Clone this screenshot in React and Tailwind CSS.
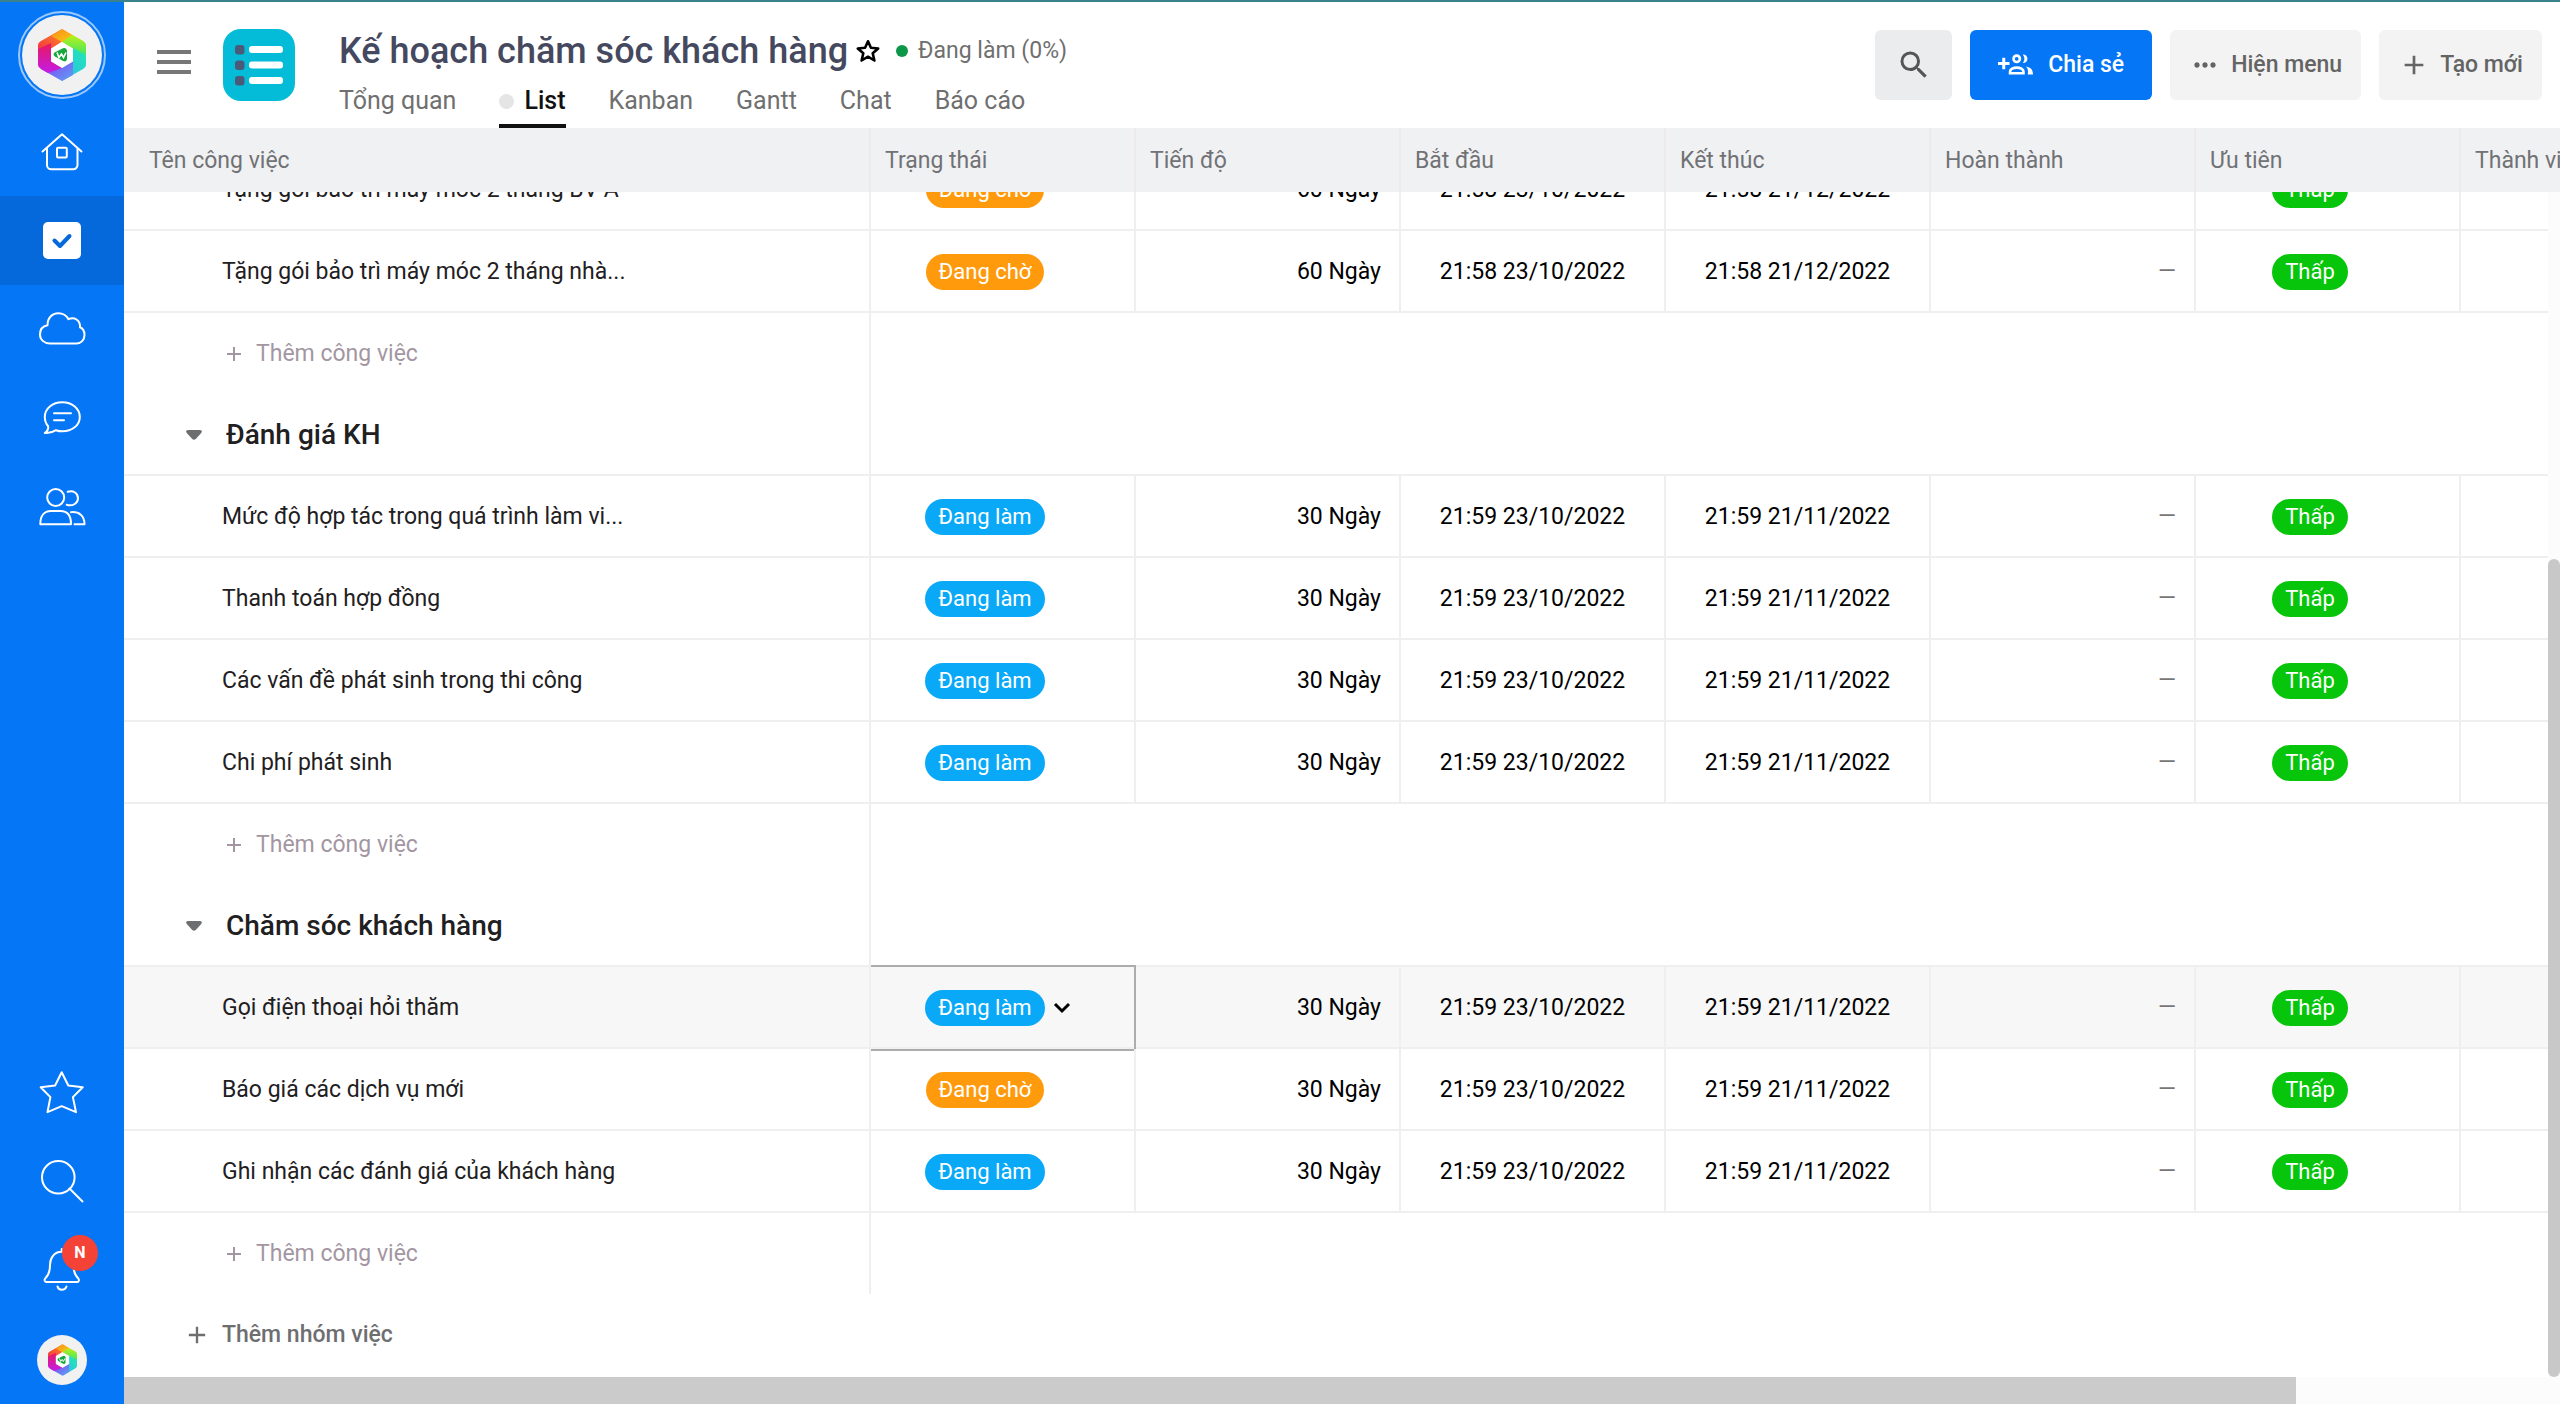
import React, { useEffect, useRef, useState } from 'react';
import clsx from 'clsx';
import { MdSearch, MdMoreHoriz, MdAdd } from 'react-icons/md';

const COLUMNS = ['Trạng thái', 'Tiến độ', 'Bắt đầu', 'Kết thúc', 'Hoàn thành', 'Ưu tiên', 'Thành viên'];

const TABS = ['Tổng quan', 'List', 'Kanban', 'Gantt', 'Chat', 'Báo cáo'];

const STATUS_COLORS = {
    'Đang làm': 'bg-[#09a9f8]',
    'Đang chờ': 'bg-[#ff9a0d]',
};

const GROUPS = [
    {
        id: 'baotri',
        tasks: [
            { name: 'Tặng gói bảo trì máy móc 2 tháng BV A', status: 'Đang chờ', progress: '60 Ngày', start: '21:58 23/10/2022', end: '21:58 21/12/2022' },
            { name: 'Tặng gói bảo trì máy móc 2 tháng nhà...', status: 'Đang chờ', progress: '60 Ngày', start: '21:58 23/10/2022', end: '21:58 21/12/2022' },
        ],
    },
    {
        id: 'danhgia',
        title: 'Đánh giá KH',
        tasks: [
            { name: 'Mức độ hợp tác trong quá trình làm vi...', status: 'Đang làm', progress: '30 Ngày', start: '21:59 23/10/2022', end: '21:59 21/11/2022' },
            { name: 'Thanh toán hợp đồng', status: 'Đang làm', progress: '30 Ngày', start: '21:59 23/10/2022', end: '21:59 21/11/2022' },
            { name: 'Các vấn đề phát sinh trong thi công', status: 'Đang làm', progress: '30 Ngày', start: '21:59 23/10/2022', end: '21:59 21/11/2022' },
            { name: 'Chi phí phát sinh', status: 'Đang làm', progress: '30 Ngày', start: '21:59 23/10/2022', end: '21:59 21/11/2022' },
        ],
    },
    {
        id: 'chamsoc',
        title: 'Chăm sóc khách hàng',
        tasks: [
            { name: 'Gọi điện thoại hỏi thăm', status: 'Đang làm', progress: '30 Ngày', start: '21:59 23/10/2022', end: '21:59 21/11/2022', selected: true },
            { name: 'Báo giá các dịch vụ mới', status: 'Đang chờ', progress: '30 Ngày', start: '21:59 23/10/2022', end: '21:59 21/11/2022' },
            { name: 'Ghi nhận các đánh giá của khách hàng', status: 'Đang làm', progress: '30 Ngày', start: '21:59 23/10/2022', end: '21:59 21/11/2022' },
        ],
    },
];

// Rainbow hexagon ring with the green mark in the middle
const HexLogo = ({ className, id }) => (
    <svg viewBox="0 0 48 52" className={className} aria-hidden="true">
        <defs>
            <linearGradient id={`${id}-a`} x1="0" y1="1" x2="1" y2="0">
                <stop offset="0" stopColor="#f0224b" />
                <stop offset="1" stopColor="#ff9a1a" />
            </linearGradient>
            <linearGradient id={`${id}-b`} x1="0" y1="0" x2="1" y2="1">
                <stop offset="0" stopColor="#ff8a14" />
                <stop offset="1" stopColor="#e9f01a" />
            </linearGradient>
            <linearGradient id={`${id}-c`} x1="0" y1="0" x2="0" y2="1">
                <stop offset="0" stopColor="#b8f218" />
                <stop offset="1" stopColor="#22e07a" />
            </linearGradient>
            <linearGradient id={`${id}-d`} x1="1" y1="0" x2="0" y2="1">
                <stop offset="0" stopColor="#1fe8b0" />
                <stop offset="1" stopColor="#30b8f5" />
            </linearGradient>
            <linearGradient id={`${id}-e`} x1="1" y1="1" x2="0" y2="0">
                <stop offset="0" stopColor="#5ea4f5" />
                <stop offset="1" stopColor="#8a2df0" />
            </linearGradient>
            <linearGradient id={`${id}-f`} x1="0" y1="0" x2="0" y2="1">
                <stop offset="0" stopColor="#e8195e" />
                <stop offset="1" stopColor="#c41be8" />
            </linearGradient>
        </defs>
        <path d="M3 12 24 0 34 6 13 20 13 32 0 24V16Q0 13.500 3 12Z" fill={`url(#${id}-a)`} />
        <path d="M24 0 45 12 48 16 35 20 24 13 13 7Z" fill={`url(#${id}-b)`} />
        <path d="M34 6 45 12Q48 13.500 48 16V28L35 32V19.500L24 13Z" fill={`url(#${id}-c)`} />
        <path d="M48 26V36Q48 38.500 45 40L24 52 22 40 35 32V19Z" fill={`url(#${id}-d)`} />
        <path d="M35 32 35 46 24 52 3 40 10 30 24 39Z" fill={`url(#${id}-e)`} />
        <path d="M0 20 13 14V32L24 39 10 44 3 40Q0 38.500 0 36Z" fill={`url(#${id}-f)`} />
        <path d="M24 13 35 19.500V32.500L24 39 13 32.500V19.500Z" fill="#fff" />
        <path d="M16.500 23.500 25 19.200Q28.500 18 29 21.500V30Q28.500 33.500 25 32L17 27.500Q14.500 25.500 16.500 23.500Z" fill="#14a83b" />
        <path d="M19 23.500 21 28.500 23.500 25 25.500 28.500 28 23.500" fill="none" stroke="#fff" strokeWidth="1.600" />
    </svg>
);

const NavIcon = ({ children }) => (
    <svg
        viewBox="0 0 48 48"
        className="size-12"
        fill="none"
        stroke="currentColor"
        strokeWidth="2"
        strokeLinecap="round"
        strokeLinejoin="round"
        aria-hidden="true"
    >
        {children}
    </svg>
);

const ShareIcon = () => (
    <svg viewBox="0 0 36 22" className="h-[22px] w-9" fill="none" stroke="currentColor" aria-hidden="true">
        <path d="M0 9.500h11.500M5.750 3.700v11.600" strokeWidth="3" />
        <circle cx="18.700" cy="4.800" r="3.200" strokeWidth="2.600" />
        <path d="M12 19.300v-1.500c0-2.600 3.500-4.200 6.800-4.200s6.700 1.600 6.700 4.200v1.500Z" strokeWidth="2.600" />
        <path d="M24.800.5C31 .3 31 9.300 24.800 9.100 27 6.300 27 3.300 24.800.5ZM28 12.400C33 13.500 35 15.500 35 20.600H29.800C30.300 16.500 30 14.500 28 12.400Z" fill="currentColor" stroke="none" />
    </svg>
);

const TOP_NAV = [
    {
        label: 'Trang chủ',
        icon: (
            <NavIcon>
                <path d="M4.500 23.500 24 6.300 43.500 23.500" />
                <path d="M9 20.500V37a4.300 4.300 0 0 0 4.300 4.300h21.900a4.300 4.300 0 0 0 4.300-4.300V20.500" />
                <rect x="19" y="19.800" width="9.800" height="9.800" rx="1" />
            </NavIcon>
        ),
    },
    {
        label: 'Công việc',
        active: true,
        icon: (
            <svg viewBox="0 0 48 48" className="size-12" aria-hidden="true">
                <rect x="5" y="5" width="38" height="37" rx="5" fill="#fff" />
                <path d="m16.500 23.500 5.500 5.500 9.500-10" fill="none" stroke="#0568db" strokeWidth="4" strokeLinecap="round" strokeLinejoin="round" />
            </svg>
        ),
    },
    {
        label: 'Lưu trữ',
        icon: (
            <NavIcon>
                <path d="M12 37.500C6 37.500 2 33.500 2 28.500 2 23.500 5 20 9.500 19.200 9.500 12 14 7.200 20.300 7.200 25 7.200 28.500 9.500 30.500 13.200 36 10.500 42.500 14 42 21.300 45 22.500 46.500 25.500 46.500 29 46.500 34 43 37.500 38.500 37.500Z" />
            </NavIcon>
        ),
    },
    {
        label: 'Tin nhắn',
        icon: (
            <NavIcon>
                <path d="M6.800 38C9.500 36 10.800 33.500 10 31 7.800 28.500 6.800 25.500 6.800 22 6.800 13.500 14.500 7.300 24.300 7.300S41.800 13.500 41.800 22 34 36.300 24.300 36.300C22 36.300 20 36 18 35.200 14.500 37.500 10.500 38.400 6.800 38Z" />
                <path d="M16 18.300h17M16 25.200h10" />
            </NavIcon>
        ),
    },
    {
        label: 'Thành viên',
        icon: (
            <NavIcon>
                <circle cx="17.700" cy="13.500" r="8.500" />
                <path d="M2.300 40.200C2.300 31 7 27 13 27h9.500C29 27 33 31 33 40.200Z" />
                <path d="M29.700 7.800C35.500 5.800 40 9.500 40 14.200S35 22.800 28.700 20.800" />
                <path d="M33 28.200C41 27.500 46.500 31.500 46.500 40.200H36.500" />
            </NavIcon>
        ),
    },
];

const Sidebar = () => (
    <nav className="flex w-[124px] shrink-0 flex-col items-center bg-[#0576f6] text-white">
        <div className="flex h-[105px] items-center">
            <a href="#workspace" aria-label="Workspace" className="flex size-[88px] items-center justify-center rounded-full border-2 border-[#9cc8fc]">
                <span className="flex size-20 items-center justify-center rounded-full bg-[#f1f1f1]">
                    <HexLogo id="ws" className="h-[52px] w-12" />
                </span>
            </a>
        </div>
        {TOP_NAV.map((item) => (
            <a
                key={item.label}
                href="#nav"
                aria-label={item.label}
                className={clsx('flex h-[89px] w-full items-center justify-center', item.active && 'bg-[#0568db]')}
            >
                {item.icon}
            </a>
        ))}
        <div className="grow" />
        <button type="button" aria-label="Yêu thích" className="flex h-[89px] w-full items-center justify-center">
            <NavIcon>
                <path d="m23.700 3.200 6.600 13.300 14.400 1.800-9.800 9.800L38 43.200l-14.300-6-14.200 6 2.900-15.100-9.700-9.800 14.400-1.800Z" />
            </NavIcon>
        </button>
        <button type="button" aria-label="Tìm kiếm" className="flex h-[89px] w-full items-center justify-center">
            <NavIcon>
                <circle cx="20.300" cy="19.200" r="16.300" />
                <path d="m31.500 30.500 13 13" />
            </NavIcon>
        </button>
        <button type="button" aria-label="Thông báo" className="flex h-[89px] w-full items-center justify-center">
            <span className="relative">
                <NavIcon>
                    <path d="M23.700 4.800C16 4.800 12 11 12 18S10.500 28.500 7.200 31.500C6 33 6.800 35 8.500 35H39C40.800 35 41.500 33 40.300 31.500 37 28.500 35.500 25 35.500 18S31 4.800 23.700 4.800ZM23.700 2v2.500" />
                    <path d="M19.500 39.500C20.500 43.800 27 43.800 28.500 39.500" />
                </NavIcon>
                <span className="absolute -top-3 -right-3 flex size-9 items-center justify-center rounded-full bg-[#f44336] text-base leading-none font-bold">
                    N
                </span>
            </span>
        </button>
        <button type="button" aria-label="Tài khoản" className="flex h-[89px] w-full items-center justify-center">
            <span className="flex size-[50px] items-center justify-center rounded-full bg-[#f1f1f1]">
                <HexLogo id="me" className="h-8 w-[29px]" />
            </span>
        </button>
    </nav>
);

const Header = () => {
    const [tab, setTab] = useState('List');

    return (
        <header className="flex h-[126px] shrink-0 items-center pr-[18px] pl-[33px]">
            <button type="button" aria-label="Menu" className="mb-1.5 flex flex-col gap-1.5">
                <span className="h-1 w-[34px] bg-[#777]" />
                <span className="h-1 w-[34px] bg-[#777]" />
                <span className="h-1 w-[34px] bg-[#777]" />
            </button>
            <svg viewBox="0 0 72 72" className="ml-8 size-[72px]" aria-hidden="true">
                <rect width="72" height="72" rx="18" fill="#04bcd8" />
                <g fill="#4b5a78">
                    <rect x="12" y="16" width="9.500" height="9.500" rx="3" />
                    <rect x="12" y="31.500" width="9.500" height="9.500" rx="3" />
                    <rect x="12" y="47" width="9.500" height="9.500" rx="3" />
                </g>
                <g fill="#fff">
                    <rect x="26" y="17" width="34" height="7" rx="3" />
                    <rect x="26" y="32.500" width="34" height="7" rx="3" />
                    <rect x="26" y="48" width="34" height="7" rx="3" />
                </g>
            </svg>

            <div className="ml-11 flex h-full flex-col justify-between">
                <div className="flex items-center pt-6">
                    <h1 className="text-[36px] leading-[50px] font-medium text-[#454960]">Kế hoạch chăm sóc khách hàng</h1>
                    <button type="button" aria-label="Đánh dấu" className="ml-2">
                        <svg viewBox="0 0 24 24" className="size-6" aria-hidden="true">
                            <path d="m12 2.300 2.900 6.500 7.300.7-5.500 4.800 1.700 7.200-6.400-3.800-6.400 3.800 1.700-7.200L1.800 9.500l7.300-.7Z" fill="none" stroke="#000" strokeWidth="2.600" strokeLinejoin="round" />
                        </svg>
                    </button>
                    <span className="ml-4 size-3 rounded-full bg-[#0b9648]" />
                    <span className="ml-2.5 text-[23px] text-[#6f6f6f]">Đang làm (0%)</span>
                </div>
                <div className="flex gap-[43px] text-[25px] leading-[30px]">
                    {TABS.map((name) => (
                        <button
                            key={name}
                            type="button"
                            onClick={() => setTab(name)}
                            className={clsx(
                                'flex items-center border-b-4 pb-2',
                                name === tab ? 'border-[#111] font-medium text-[#111]' : 'border-transparent text-[#6f6f6f]',
                            )}
                        >
                            {name === tab && <span className="mr-2.5 size-[15px] rounded-full bg-[#e5e5e5]" />}
                            {name}
                        </button>
                    ))}
                </div>
            </div>

            <div className="ml-auto flex items-center gap-[18px] text-[23px] font-medium text-[#646464]">
                <button type="button" aria-label="Tìm kiếm công việc" className="flex h-[70px] w-[77px] items-center justify-center rounded-md bg-[#ebecee]">
                    <MdSearch className="size-9 text-[#555]" />
                </button>
                <button type="button" className="flex h-[70px] items-center gap-3.5 rounded-md bg-[#0576f6] px-7 text-white">
                    <ShareIcon />
                    Chia sẻ
                </button>
                <button type="button" className="flex h-[70px] items-center gap-2.5 rounded-md bg-[#f3f3f3] px-[19px]">
                    <MdMoreHoriz className="size-8" />
                    Hiện menu
                </button>
                <button type="button" className="flex h-[70px] items-center gap-2.5 rounded-md bg-[#f3f3f3] px-[19px]">
                    <MdAdd className="size-8" />
                    Tạo mới
                </button>
            </div>
        </header>
    );
};

// The slot after the label holds the arrow, shown only on the selected cell
const Pill = ({ color, open, children }) => (
    <button type="button" aria-haspopup="listbox" className="mx-auto flex items-center">
        <span className={clsx('flex h-9 items-center rounded-full px-[13px] text-[22px] leading-none text-white', color)}>{children}</span>
        <span className="flex w-[35px] justify-center">
            {open && (
                <svg viewBox="0 0 18 12" className="h-3 w-[18px]" aria-hidden="true">
                    <path d="m2 2 7 7 7-7" fill="none" stroke="#000" strokeWidth="3" />
                </svg>
            )}
        </span>
    </button>
);

const TaskRow = ({ task }) => {
    const cell = 'border-r-2 border-b-2 border-[#f1eeee] pt-0.5';

    return (
        <tr className={clsx('h-[82px] text-black', task.selected && 'bg-[#f7f7f7]')}>
            <td className={clsx(cell, 'pl-[98px] text-[#1f2022]')}>{task.name}</td>
            <td className={clsx(cell, 'relative')}>
                {task.selected && <span className="pointer-events-none absolute -top-0.5 -right-0.5 -bottom-1 left-0 border-2 border-l-0 border-[#acacac]" />}
                <Pill color={STATUS_COLORS[task.status]} open={task.selected}>{task.status}</Pill>
            </td>
            <td className={clsx(cell, 'pr-[18px] text-right')}>{task.progress}</td>
            <td className={clsx(cell, 'text-center')}>{task.start}</td>
            <td className={clsx(cell, 'text-center')}>{task.end}</td>
            <td className={clsx(cell, 'pr-[18px] text-right text-[#777]')}>—</td>
            <td className={cell}>
                <Pill color="bg-[#06c50a]">Thấp</Pill>
            </td>
            <td className={cell} />
        </tr>
    );
};

const TaskGroup = ({ group }) => (
    <tbody>
        {group.title && (
            <tr className="h-[82px]">
                <th scope="rowgroup" className="border-r-2 border-b-2 border-[#f1eeee] pt-0.5 pl-[62px] text-left">
                    <button type="button" className="flex items-center gap-6 text-[28px] leading-9 font-medium text-[#1f2022]">
                        <svg viewBox="0 0 16 10" className="h-2.5 w-4" aria-hidden="true">
                            <path d="M2 0h12c2 0 2.500 2 1 3.300L10 8.800Q8 10.500 6 8.800L1 3.300C-.5 2 0 0 2 0Z" fill="#6d6e70" />
                        </svg>
                        {group.title}
                    </button>
                </th>
                <td colSpan={7} className="border-b-2 border-[#f1eeee]" />
            </tr>
        )}
        {group.tasks.map((task) => (
            <TaskRow key={task.name} task={task} />
        ))}
        <tr className="h-[81px]">
            <td className="border-r-2 border-[#f1eeee] pl-[98px]">
                <button type="button" className="flex items-center gap-2.5 text-[#a396a2]">
                    <MdAdd className="size-6" />
                    Thêm công việc
                </button>
            </td>
            <td colSpan={7} />
        </tr>
    </tbody>
);

const App = () => {
    const scroller = useRef(null);

    // Open the list a little way down
    useEffect(() => {
        scroller.current.scrollTop = 43;
    }, []);

    return (
        <div className="flex h-screen overflow-hidden border-t-2 border-[#3a828c] bg-white font-[Roboto,sans-serif]">
            <Sidebar />
            <div className="flex min-w-0 grow flex-col">
                <Header />
                <main className="relative min-h-0 grow">
                    <div ref={scroller} className="h-full overflow-auto [scrollbar-width:none]">
                        <table className="w-[2731px] table-fixed border-separate border-spacing-0 text-[23px] leading-8">
                            <thead className="sticky top-0 z-20">
                                <tr className="h-16 bg-[#f0f1f3] text-left text-[#717275]">
                                    <th scope="col" className="w-[747px] border-r-2 border-[#eeeaec] pt-0.5 pl-[25px] font-normal">Tên công việc</th>
                                    {COLUMNS.map((name) => (
                                        <th key={name} scope="col" className={clsx('border-r-2 border-[#eeeaec] pt-0.5 pl-3.5 font-normal', name !== 'Thành viên' && 'w-[265px]')}>
                                            {name}
                                        </th>
                                    ))}
                                </tr>
                            </thead>
                            {GROUPS.map((group) => (
                                <TaskGroup key={group.id} group={group} />
                            ))}
                        </table>
                        <div className="flex h-[82px] items-center pl-[59px]">
                            <button type="button" className="flex items-center gap-[11px] text-[23px] font-medium text-[#6d6e70]">
                                <MdAdd className="size-7" />
                                Thêm nhóm việc
                            </button>
                        </div>
                        <div className="h-10" />
                    </div>
                    <div className="absolute top-16 right-0 bottom-0 z-10 flex w-3 flex-col justify-end bg-[#fcfcfc]">
                        <div className="h-[69%] rounded-full bg-[#c8c8c8]" />
                    </div>
                </main>
                <div className="h-[27px] shrink-0 bg-[#fcfcfc] pr-[264px]">
                    <div className="h-full bg-[#cbcbcb]" />
                </div>
            </div>
        </div>
    );
};

export default App;
